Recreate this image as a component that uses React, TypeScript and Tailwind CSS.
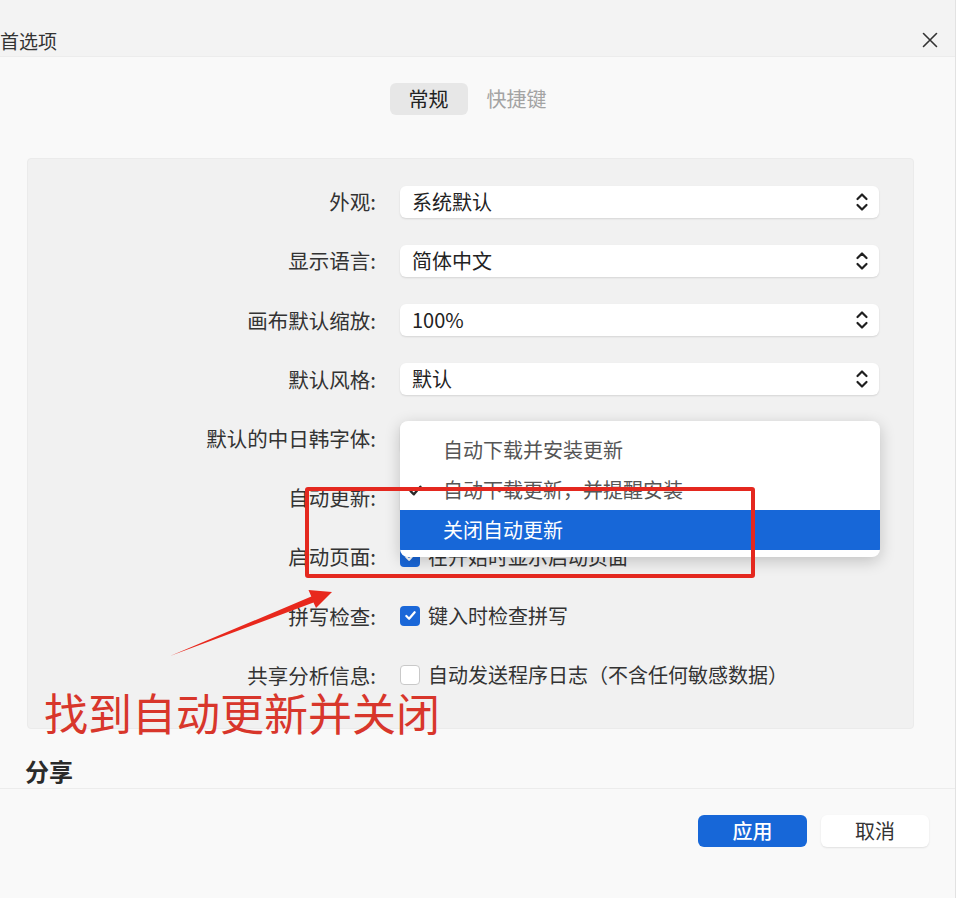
import React from 'react';

const rows = [
    { label: '外观:', value: '系统默认' },
    { label: '显示语言:', value: '简体中文' },
    { label: '画布默认缩放:', value: '100%' },
    { label: '默认风格:', value: '默认' },
    { label: '默认的中日韩字体:', value: '思源黑体' },
    { label: '自动更新:', value: '自动下载更新，并提醒安装' },
];

const checks = [
    { label: '启动页面:', text: '在开始时显示启动页面', on: true },
    { label: '拼写检查:', text: '键入时检查拼写', on: true },
    { label: '共享分析信息:', text: '自动发送程序日志（不含任何敏感数据）', on: false },
];

function UpDown() {
    return (
        <svg width="14" height="22" viewBox="0 0 14 22" fill="none" stroke="#1f1f1f" strokeWidth="2.2" strokeLinecap="round" strokeLinejoin="round">
            <path d="M2.5 8 L7 3.5 L11.5 8" />
            <path d="M2.5 14 L7 18.5 L11.5 14" />
        </svg>
    );
}

function Check({ on }: { on: boolean }) {
    if (!on) {
        return <div className="h-5 w-5 shrink-0 rounded-[4px] border border-[#c9c9c9] bg-white" />;
    }
    return (
        <div className="flex h-5 w-5 shrink-0 items-center justify-center rounded-[4px] bg-[#1a67d8]">
            <svg width="13" height="13" viewBox="0 0 14 14" fill="none" stroke="white" strokeWidth="2.4" strokeLinecap="round" strokeLinejoin="round">
                <path d="M2.5 7.5 L5.5 10.5 L11.5 3.5" />
            </svg>
        </div>
    );
}

export default function App() {
    return (
        <div className="relative flex h-[898px] w-[958px] overflow-hidden bg-white font-['Noto_Sans_CJK_SC','Noto_Sans',sans-serif]">
            <div className="flex w-[956px] flex-col border-r border-[#e2e2e2] bg-[#f9f9f9]">
                {/* title bar */}
                <div className="flex h-[57px] items-center justify-between border-b border-[#ececec] bg-[#f3f3f3] pr-[17px] pt-6">
                    <span className="text-[19px] leading-none text-[#333]">首选项</span>
                    <svg width="16" height="16" viewBox="0 0 16 16" stroke="#333" strokeWidth="1.6" strokeLinecap="round">
                        <path d="M1.5 1.5 L14.5 14.5 M14.5 1.5 L1.5 14.5" />
                    </svg>
                </div>

                {/* tabs */}
                <div className="mt-[26px] flex justify-center">
                    <div className="flex h-8 items-center rounded-md bg-[#e7e7e7] px-[19px] text-[20px] text-[#222]">常规</div>
                    <div className="flex h-8 items-center px-[19px] text-[20px] text-[#a3a3a3]">快捷键</div>
                </div>

                {/* panel */}
                <div className="relative ml-[27px] mr-[41px] mt-[43px] h-[571px] rounded-[4px] border border-[#ebebeb] bg-[#f1f1f1] pt-[13px]">
                    {rows.map((r) => (
                        <div key={r.label} className="flex h-[59.2px] items-center gap-6">
                            <div className="w-[348px] text-right text-[20.5px] text-[#333]">{r.label}</div>
                            <div className="flex h-8 w-[479px] items-center justify-between rounded-[6px] bg-white pl-3 pr-[10px] text-[20px] text-[#222] shadow-[0_1px_2px_rgba(0,0,0,0.12)]">
                                <span>{r.value}</span>
                                <UpDown />
                            </div>
                        </div>
                    ))}
                    {checks.map((c) => (
                        <div key={c.label} className="flex h-[59.2px] items-center gap-6">
                            <div className="w-[348px] text-right text-[20.5px] text-[#333]">{c.label}</div>
                            <div className="flex items-center gap-2 text-[20px] text-[#333]">
                                <Check on={c.on} />
                                <span>{c.text}</span>
                            </div>
                        </div>
                    ))}

                    {/* open dropdown menu */}
                    <div className="absolute left-[372px] top-[262px] w-[480px] overflow-hidden rounded-[8px] bg-white pb-[7px] pt-[9px] text-[20px] shadow-[0_4px_16px_rgba(0,0,0,0.2)]">
                        <div className="flex h-10 items-center pl-[43px] text-[#555]">自动下载并安装更新</div>
                        <div className="relative flex h-10 items-center pl-[43px] text-[#555]">
                            <svg className="absolute left-[9px]" width="13" height="13" viewBox="0 0 12 12" fill="none" stroke="#2a2a2a" strokeWidth="2.2" strokeLinecap="round" strokeLinejoin="round">
                                <path d="M1.5 6.5 L4.5 9.5 L10.5 2.5" />
                            </svg>
                            自动下载更新，并提醒安装
                        </div>
                        <div className="flex h-10 items-center bg-[#1767d8] pl-[43px] text-white">关闭自动更新</div>
                    </div>
                </div>

                <div className="ml-[25px] mt-[27px] text-[24px] font-bold leading-[30px] text-[#2b2b2b]">分享</div>
                <div className="mt-[2px] border-t border-[#ececec]" />

                {/* footer */}
                <div className="flex justify-end gap-[14px] pr-[26px] pt-[26px]">
                    <button className="h-8 w-[109px] rounded-[6px] bg-[#1767d8] text-[20px] font-medium text-white">应用</button>
                    <button className="h-8 w-[108px] rounded-[6px] bg-white text-[20px] text-[#333] shadow-[0_1px_2px_rgba(0,0,0,0.1)]">取消</button>
                </div>
            </div>

            {/* annotations */}
            <div className="absolute left-[305px] top-[487px] h-[91px] w-[450px] rounded-[3px] border-4 border-[#e4281f]" />
            <svg className="absolute left-0 top-0" width="958" height="898" viewBox="0 0 958 898">
                <polygon
                    points="170,656 313.5,602.5 316,608 332,592 308.5,590 311.3,596.5"
                    fill="#e8281d"
                />
            </svg>
            <div className="absolute left-[44px] top-[690px] text-[44px] leading-none text-[#d8362b]">找到自动更新并关闭</div>
        </div>
    );
}
